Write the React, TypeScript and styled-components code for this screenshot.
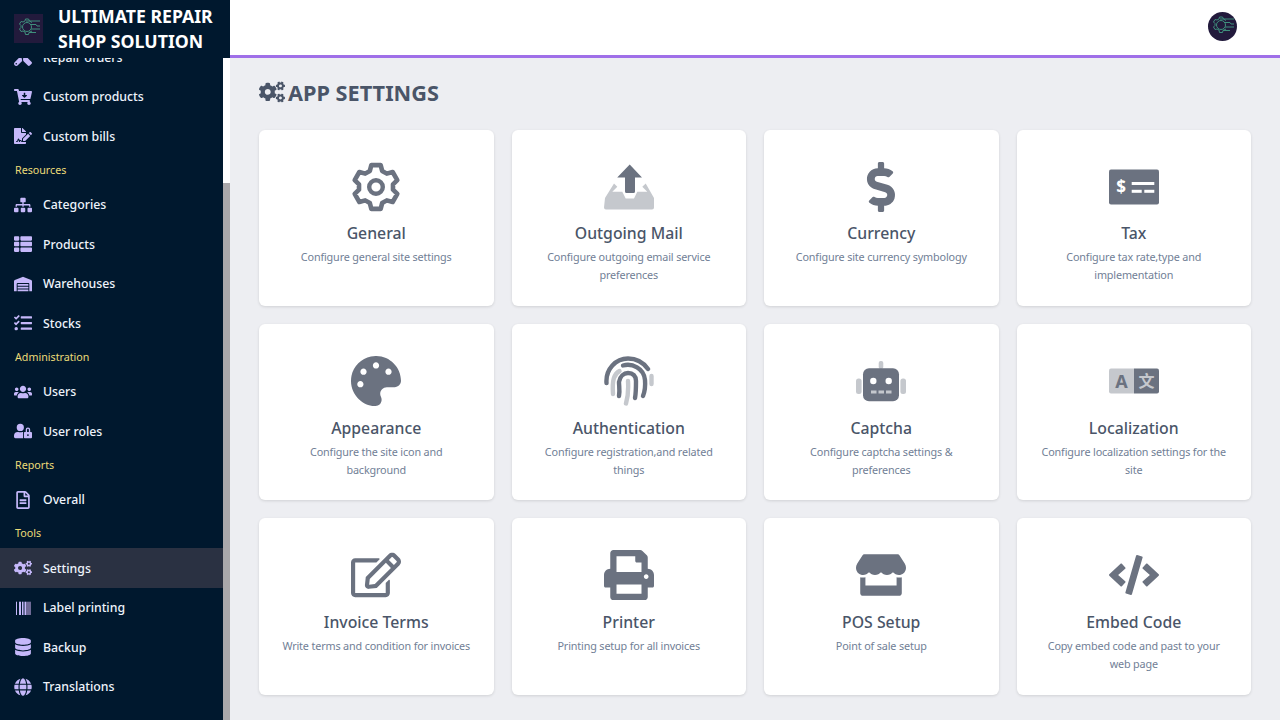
import React from 'react';
import styled, { createGlobalStyle } from 'styled-components';
import {
  FaCogs,
  FaTools,
  FaCartArrowDown,
  FaFileSignature,
  FaSitemap,
  FaThList,
  FaWarehouse,
  FaTasks,
  FaUsers,
  FaUserLock,
  FaRegFileAlt,
  FaDatabase,
  FaGlobe,
  FaDollarSign,
  FaPalette,
  FaRegEdit,
  FaPrint,
  FaStore,
  FaCode,
} from 'react-icons/fa';

const GlobalStyle = createGlobalStyle`
  html, body {
    margin: 0;
    height: 100%;
    overflow: hidden;
    font-family: "Noto Sans", "Open Sans", sans-serif;
  }
  * { box-sizing: border-box; }
`;

const Shell = styled.div`
  display: grid;
  grid-template-columns: 230px 1fr;
  width: 1280px;
  height: 720px;
  overflow: hidden;
  background: #edeef2;
`;

const Sidebar = styled.aside`
  display: flex;
  flex-direction: column;
  height: 720px;
  background: #00182e;
`;

const Brand = styled.div`
  display: flex;
  align-items: center;
  gap: 15px;
  height: 58px;
  padding: 0 0 1px 14px;
  flex-shrink: 0;
`;

const BrandName = styled.div`
  width: 172px;
  font-size: 17.7px;
  font-weight: 700;
  line-height: 25px;
  color: #fff;
`;

const SideBody = styled.div`
  display: flex;
  flex: 1;
  min-height: 0;
`;

const NavScroll = styled.nav`
  flex: 1;
  min-width: 0;
  overflow: hidden;
`;

const NavList = styled.div`
  margin-top: -20.8px;
`;

const SectionLabel = styled.div`
  display: flex;
  align-items: center;
  height: 28.8px;
  padding: 0 0 1px 15px;
  font-size: 10.7px;
  color: #ecdc78;
`;

const NavItem = styled.a<{ $active?: boolean }>`
  display: flex;
  align-items: center;
  gap: 11px;
  height: 39.6px;
  padding-left: 14px;
  font-size: 12.3px;
  font-weight: 500;
  color: #eef3fb;
  background: ${({ $active }) => ($active ? '#2a3142' : 'transparent')};

  svg {
    width: 18px;
    height: 18px;
    flex-shrink: 0;
    color: #c5b8fa;
  }
`;

const ScrollRail = styled.div`
  width: 7px;
  background: #aaa8ab;
`;

const ScrollThumb = styled.div`
  height: 125px;
  background: #fff;
`;

const Main = styled.main`
  display: flex;
  flex-direction: column;
  min-width: 0;
`;

const Topbar = styled.header`
  display: flex;
  align-items: center;
  justify-content: flex-end;
  height: 58px;
  padding-right: 43px;
  background: #fff;
  border-bottom: 3px solid #9f6fe8;
`;

const Avatar = styled.div`
  width: 29px;
  height: 29px;
  margin-top: -2px;
  border-radius: 50%;
  overflow: hidden;
`;

const Content = styled.div`
  padding: 21px 29px 0;
`;

const PageTitle = styled.h1`
  display: flex;
  align-items: center;
  gap: 3px;
  height: 26px;
  margin: 0 0 25px;
  font-size: 21.7px;
  font-weight: 700;
  color: #4a5568;

  svg {
    width: 26px;
    height: 26px;
  }
`;

const CardGrid = styled.div`
  display: grid;
  grid-template-columns: repeat(4, 1fr);
  grid-auto-rows: 176.2px;
  gap: 18px;
`;

const Card = styled.div`
  display: flex;
  flex-direction: column;
  align-items: center;
  padding: 32px 23px 0;
  background: #fff;
  border-radius: 6px;
  box-shadow: 0 1px 3px rgba(0, 0, 0, 0.12);
  text-align: center;
`;

const CardIcon = styled.div`
  display: flex;
  align-items: center;
  justify-content: center;
  width: 50px;
  height: 50px;
  color: #6b7280;

  svg {
    width: 50px;
    height: 50px;
  }
`;

const CardTitle = styled.div`
  margin-top: 8.35px;
  font-size: 15.8px;
  font-weight: 500;
  line-height: 26px;
  color: #4a5568;
`;

const CardText = styled.div`
  margin-top: 2px;
  font-size: 10.8px;
  letter-spacing: -0.15px;
  line-height: 18px;
  color: #718096;
`;

const DARK = '#6b7280';
const LIGHT = '#c5c8cd';

// outline of the six tooth cog, from polar points
const cogPath = (() => {
  const points: string[] = [];
  for (let i = 0; i < 6; i++) {
    const a = -90 + i * 60;
    const corners: [number, number][] = [
      [a - 21, 17.2],
      [a - 12, 22.4],
      [a + 12, 22.4],
      [a + 21, 17.2],
    ];
    corners.forEach(([deg, r]) => {
      const rad = (deg * Math.PI) / 180;
      points.push(`${(25 + r * Math.cos(rad)).toFixed(2)} ${(25 + r * Math.sin(rad)).toFixed(2)}`);
    });
  }
  return `M${points.join('L')}Z`;
})();

const CogIcon = () => (
  <svg viewBox="0 0 50 50">
    <path d={cogPath} fill="none" stroke={DARK} strokeWidth="4.6" strokeLinejoin="round" />
    <circle cx="25" cy="25" r="6.8" fill="none" stroke={DARK} strokeWidth="4.4" />
  </svg>
);

const InboxOutIcon = () => (
  <svg viewBox="0 0 50 50">
    <path
      d="M1 36L10 21.5L13.3 24.8L8.3 29.8H18.3L21.7 36.5H30L33.3 29.8H43.3L38.3 24.8L41.7 21.5L50 36V45.5Q50 47.5 48 47.5H2Q0 47.5 0 45.5Z"
      fill={LIGHT}
    />
    <path d="M25.7 2.5L38 15.5H31V29.5Q31 31 29.5 31H22.5Q21 31 21 29.5V15.5H13.2Z" fill={DARK} />
  </svg>
);

const TaxIcon = () => (
  <svg viewBox="0 0 50 50">
    <rect y="7.5" width="50" height="35" rx="2" fill={DARK} />
    <text x="12.2" y="31" textAnchor="middle" fontFamily="Noto Sans, sans-serif" fontWeight="700" fontSize="17" fill="#fff">$</text>
    <rect x="22.7" y="20" width="22.6" height="3" fill="#fff" />
    <rect x="22.7" y="27.8" width="10" height="3" fill="#fff" />
    <rect x="35.3" y="27.8" width="10" height="3" fill="#fff" />
  </svg>
);

const FingerprintIcon = () => (
  <svg viewBox="0 0 50 50" fill="none" strokeWidth="4.4" strokeLinecap="round">
    <path d="M2.500 27C1.500 13 12 2.500 24 2.500C32 2.500 39 6 44 13" stroke={DARK} />
    <path d="M19 9.500C28 7 40 12 41 24C41.500 30 41 35 39 40" stroke={DARK} />
    <path d="M15 40C16 34 15 30 15 26C16 20 20 17 24 17C29 17 32 20 32 25C32 32 32 37 31 42" stroke={DARK} />
    <path d="M47.500 20V28" stroke={LIGHT} />
    <path d="M15.500 15C10 18 8 24 9 38" stroke={LIGHT} />
    <path d="M24 25C24.500 33 24 41 22 47.500" stroke={LIGHT} />
  </svg>
);

const RobotIcon = () => (
  <svg viewBox="0 0 50 50">
    <rect x="22.700" y="5" width="4.600" height="8" rx="2" fill={LIGHT} />
    <rect x="0" y="22.500" width="5.600" height="15.500" rx="2.500" fill={LIGHT} />
    <rect x="44.400" y="22.500" width="5.600" height="15.500" rx="2.500" fill={LIGHT} />
    <rect x="7" y="12.300" width="36" height="33" rx="6" fill={DARK} />
    <circle cx="17.300" cy="25" r="3.200" fill="#fff" />
    <circle cx="32.700" cy="25" r="3.200" fill="#fff" />
    <rect x="15" y="34.500" width="5.500" height="3" fill={LIGHT} />
    <rect x="22.500" y="34.500" width="5.500" height="3" fill={LIGHT} />
    <rect x="30" y="34.500" width="5.500" height="3" fill={LIGHT} />
  </svg>
);

const LanguageIcon = () => (
  <svg viewBox="0 0 50 50">
    <path d="M2 12.500H25V37.500H2Q0 37.500 0 35.500V14.500Q0 12.500 2 12.500Z" fill={LIGHT} />
    <path d="M25 12.500H48Q50 12.500 50 14.500V35.500Q50 37.500 48 37.500H25Z" fill={DARK} />
    <text x="12.500" y="31.500" textAnchor="middle" fontFamily="Noto Sans, sans-serif" fontWeight="700" fontSize="18" fill={DARK}>A</text>
    <text x="37.500" y="31" textAnchor="middle" fontFamily="Noto Sans CJK SC, sans-serif" fontWeight="700" fontSize="16" fill={LIGHT}>文</text>
  </svg>
);

const BarcodeIcon = () => (
  <svg viewBox="0 0 18 18">
    <rect x="2" y="2.700" width="1" height="13.300" fill="#c5b8fa" />
    <rect x="5" y="2.700" width="2" height="13.300" fill="#c5b8fa" />
    <rect x="8" y="2.700" width="1.500" height="13.300" fill="#c5b8fa" />
    <rect x="10.500" y="2.700" width="1.500" height="13.300" fill="#c5b8fa" />
    <rect x="12" y="2.700" width="5" height="13.300" fill="#6f6a96" />
  </svg>
);

const LogoMark = () => (
  <svg viewBox="0 0 29 29" width="29" height="29">
    <rect width="29" height="29" fill="#221a3c" />
    <path
      d="M18 8.500L15.500 7L14.500 5H11.500L11 7L9 8L7 7.500L5.500 10L7 11.500V13.500L5.500 15L7 17.500L9 17L11 18L11.500 20.500H14.500L15 18.500L18 17"
      fill="none"
      stroke="#3f8f7c"
      strokeWidth="1"
    />
    <circle cx="13" cy="13" r="4.500" fill="none" stroke="#3f8f7c" strokeWidth="1" />
    <path d="M12 7H26M16 10.500H22L23 12H26M17 15H26M15 18.500H22" fill="none" stroke="#3f8f7c" strokeWidth="1" />
  </svg>
);

const resourceItems = [
  { label: 'Categories', icon: <FaSitemap /> },
  { label: 'Products', icon: <FaThList /> },
  { label: 'Warehouses', icon: <FaWarehouse /> },
  { label: 'Stocks', icon: <FaTasks /> },
];

const cards = [
  { title: 'General', text: 'Configure general site settings', icon: <CogIcon /> },
  { title: 'Outgoing Mail', text: 'Configure outgoing email service preferences', icon: <InboxOutIcon /> },
  { title: 'Currency', text: 'Configure site currency symbology', icon: <FaDollarSign /> },
  { title: 'Tax', text: 'Configure tax rate,type and implementation', icon: <TaxIcon /> },
  { title: 'Appearance', text: 'Configure the site icon and background', icon: <FaPalette /> },
  { title: 'Authentication', text: 'Configure registration,and related things', icon: <FingerprintIcon /> },
  { title: 'Captcha', text: 'Configure captcha settings & preferences', icon: <RobotIcon /> },
  { title: 'Localization', text: 'Configure localization settings for the site', icon: <LanguageIcon /> },
  { title: 'Invoice Terms', text: 'Write terms and condition for invoices', icon: <FaRegEdit /> },
  { title: 'Printer', text: 'Printing setup for all invoices', icon: <FaPrint /> },
  { title: 'POS Setup', text: 'Point of sale setup', icon: <FaStore /> },
  { title: 'Embed Code', text: 'Copy embed code and past to your web page', icon: <FaCode /> },
];

export default function App() {
  return (
    <>
      <GlobalStyle />
      <Shell>
        <Sidebar>
          <Brand>
            <LogoMark />
            <BrandName>ULTIMATE REPAIR SHOP SOLUTION</BrandName>
          </Brand>
          <SideBody>
            <NavScroll>
              <NavList>
                <NavItem><FaTools />Repair orders</NavItem>
                <NavItem><FaCartArrowDown />Custom products</NavItem>
                <NavItem><FaFileSignature />Custom bills</NavItem>
                <SectionLabel>Resources</SectionLabel>
                {resourceItems.map((item) => (
                  <NavItem key={item.label}>{item.icon}{item.label}</NavItem>
                ))}
                <SectionLabel>Administration</SectionLabel>
                <NavItem><FaUsers />Users</NavItem>
                <NavItem><FaUserLock />User roles</NavItem>
                <SectionLabel>Reports</SectionLabel>
                <NavItem><FaRegFileAlt />Overall</NavItem>
                <SectionLabel>Tools</SectionLabel>
                <NavItem $active><FaCogs />Settings</NavItem>
                <NavItem><BarcodeIcon />Label printing</NavItem>
                <NavItem><FaDatabase />Backup</NavItem>
                <NavItem><FaGlobe />Translations</NavItem>
              </NavList>
            </NavScroll>
            <ScrollRail>
              <ScrollThumb />
            </ScrollRail>
          </SideBody>
        </Sidebar>
        <Main>
          <Topbar>
            <Avatar>
              <LogoMark />
            </Avatar>
          </Topbar>
          <Content>
            <PageTitle>
              <FaCogs />
              APP SETTINGS
            </PageTitle>
            <CardGrid>
              {cards.map((card) => (
                <Card key={card.title}>
                  <CardIcon>{card.icon}</CardIcon>
                  <CardTitle>{card.title}</CardTitle>
                  <CardText>{card.text}</CardText>
                </Card>
              ))}
            </CardGrid>
          </Content>
        </Main>
      </Shell>
    </>
  );
}
